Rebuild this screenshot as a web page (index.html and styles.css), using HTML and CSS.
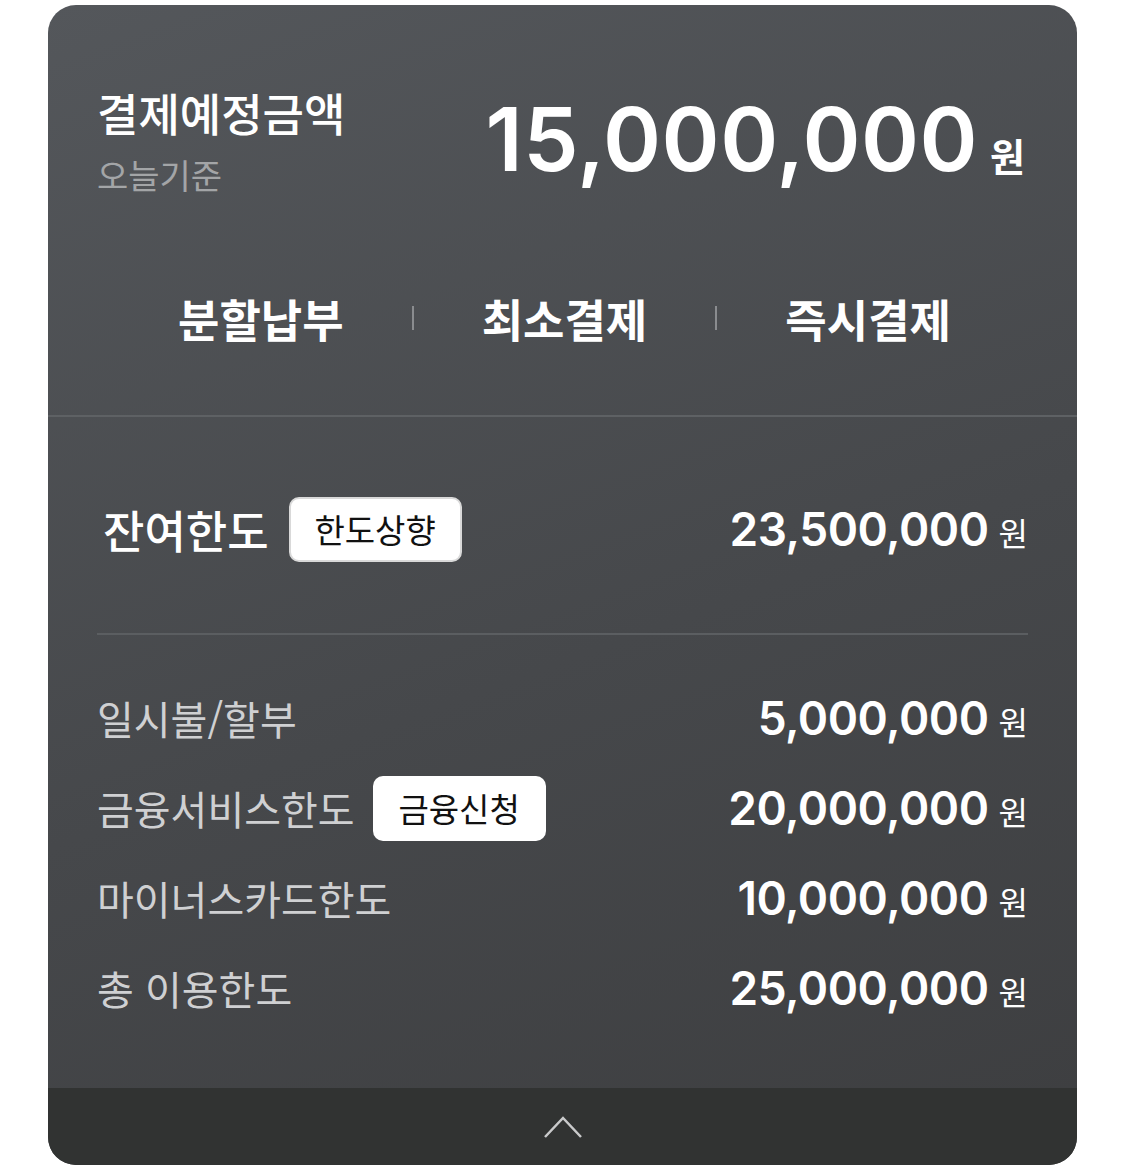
FILE: index.html
```html
<!DOCTYPE html>
<html lang="ko">
<head>
  <meta charset="UTF-8" />
  <meta name="viewport" content="width=device-width, initial-scale=1.0"/>
  <title>결제예정금액</title>
  <link rel="stylesheet" href="styles.css">
</head>
<body>
  <div class="card">
    <!-- Payment summary -->
    <div class="summary">
      <div class="summary-title">
        <div class="title">결제예정금액</div>
        <div class="subtitle">오늘기준</div>
      </div>
      <div class="big-amount">
        <span class="num">15,000,000</span><span class="won">원</span>
      </div>
    </div>

    <!-- Payment actions -->
    <div class="actions">
      <span class="action">분할납부</span>
      <span class="sep"></span>
      <span class="action">최소결제</span>
      <span class="sep"></span>
      <span class="action">즉시결제</span>
    </div>

    <div class="limits">
      <div class="row main-row">
        <div class="label">
          <span>잔여한도</span>
          <button type="button" class="chip chip-border">한도상향</button>
        </div>
        <div class="amount"><span class="num">23,500,000</span><span class="won">원</span></div>
      </div>

      <div class="line"></div>

      <div class="row">
        <div class="label"><span>일시불/할부</span></div>
        <div class="amount"><span class="num">5,000,000</span><span class="won">원</span></div>
      </div>
      <div class="row">
        <div class="label">
          <span>금융서비스한도</span>
          <button type="button" class="chip">금융신청</button>
        </div>
        <div class="amount"><span class="num">20,000,000</span><span class="won">원</span></div>
      </div>
      <div class="row">
        <div class="label"><span>마이너스카드한도</span></div>
        <div class="amount"><span class="num">10,000,000</span><span class="won">원</span></div>
      </div>
      <div class="row">
        <div class="label"><span>총 이용한도</span></div>
        <div class="amount"><span class="num">25,000,000</span><span class="won">원</span></div>
      </div>
    </div>

    <div class="toggle">
      <svg width="40" height="24" viewBox="0 0 40 24">
        <polyline points="2,22 20,3 38,22" fill="none" stroke="#c9cacb" stroke-width="2.5"/>
      </svg>
    </div>
  </div>
</body>
</html>
```

FILE: styles.css
```css
body {
  margin: 0;
  padding: 5px 48px 2px;
  background-color: #ffffff;
  font-family: "Noto Sans CJK KR", "Noto Sans", sans-serif;
}

.card {
  width: 1029px;
  border-radius: 28px;
  overflow: hidden;
  background: linear-gradient(160deg, #54575b 0%, #46484b 55%, #3d3e40 100%);
  color: white;
}

.summary {
  display: flex;
  justify-content: space-between;
  align-items: flex-start;
  padding: 80px 52px 0 49px;
  height: 176px;
}

.title {
  font-size: 45px;
  font-weight: 500;
  line-height: 56px;
}

.subtitle {
  font-size: 34px;
  color: #a3a5a7;
  line-height: 52px;
  margin-top: 8px;
}

.big-amount {
  display: flex;
  align-items: baseline;
  margin-top: 6px;
}

.big-amount .num {
  font-family: "Inter", "Noto Sans", sans-serif;
  font-size: 88px;
  font-weight: 600;
  letter-spacing: 0.5px;
  line-height: 96px;
}

.big-amount .won {
  font-size: 38px;
  font-weight: 700;
  margin-left: 12px;
}

.actions {
  display: flex;
  align-items: center;
  justify-content: space-between;
  padding: 0 126px 20px 130px;
  height: 154px;
  border-bottom: 2px solid #5e6164;
  margin-top: -20px;
}

.action {
  font-size: 45px;
  font-weight: 700;
}

.sep {
  width: 2px;
  height: 24px;
  background-color: #8a8c8f;
}

.limits {
  padding: 78px 49px 55px 49px;
}

.row {
  display: flex;
  justify-content: space-between;
  align-items: center;
  height: 90px;
}

.main-row {
  height: 68px;
  margin-bottom: 70px;
}

.label {
  display: flex;
  align-items: center;
  gap: 18px;
  font-size: 40px;
  color: #cfd0d2;
}

.main-row .label {
  font-size: 45px;
  font-weight: 500;
  color: white;
  padding-left: 6px;
  gap: 20px;
}

.chip {
  background-color: white;
  color: #111;
  border: none;
  border-radius: 10px;
  font-family: "Noto Sans CJK KR", sans-serif;
  font-size: 33px;
  height: 65px;
  width: 173px;
  padding: 0;
}

.chip-border {
  border: 2px solid #d9d9d9;
}

.amount {
  display: flex;
  align-items: baseline;
}

.amount .num {
  font-family: "Inter", "Noto Sans", sans-serif;
  font-size: 46px;
  font-weight: 600;
  letter-spacing: -0.5px;
}

.amount .won {
  font-size: 32px;
  margin-left: 10px;
}

.line {
  height: 2px;
  background-color: #5b5e61;
  margin-bottom: 38px;
}

.toggle {
  height: 77px;
  background-color: #313332;
  display: flex;
  justify-content: center;
  align-items: center;
}
```
